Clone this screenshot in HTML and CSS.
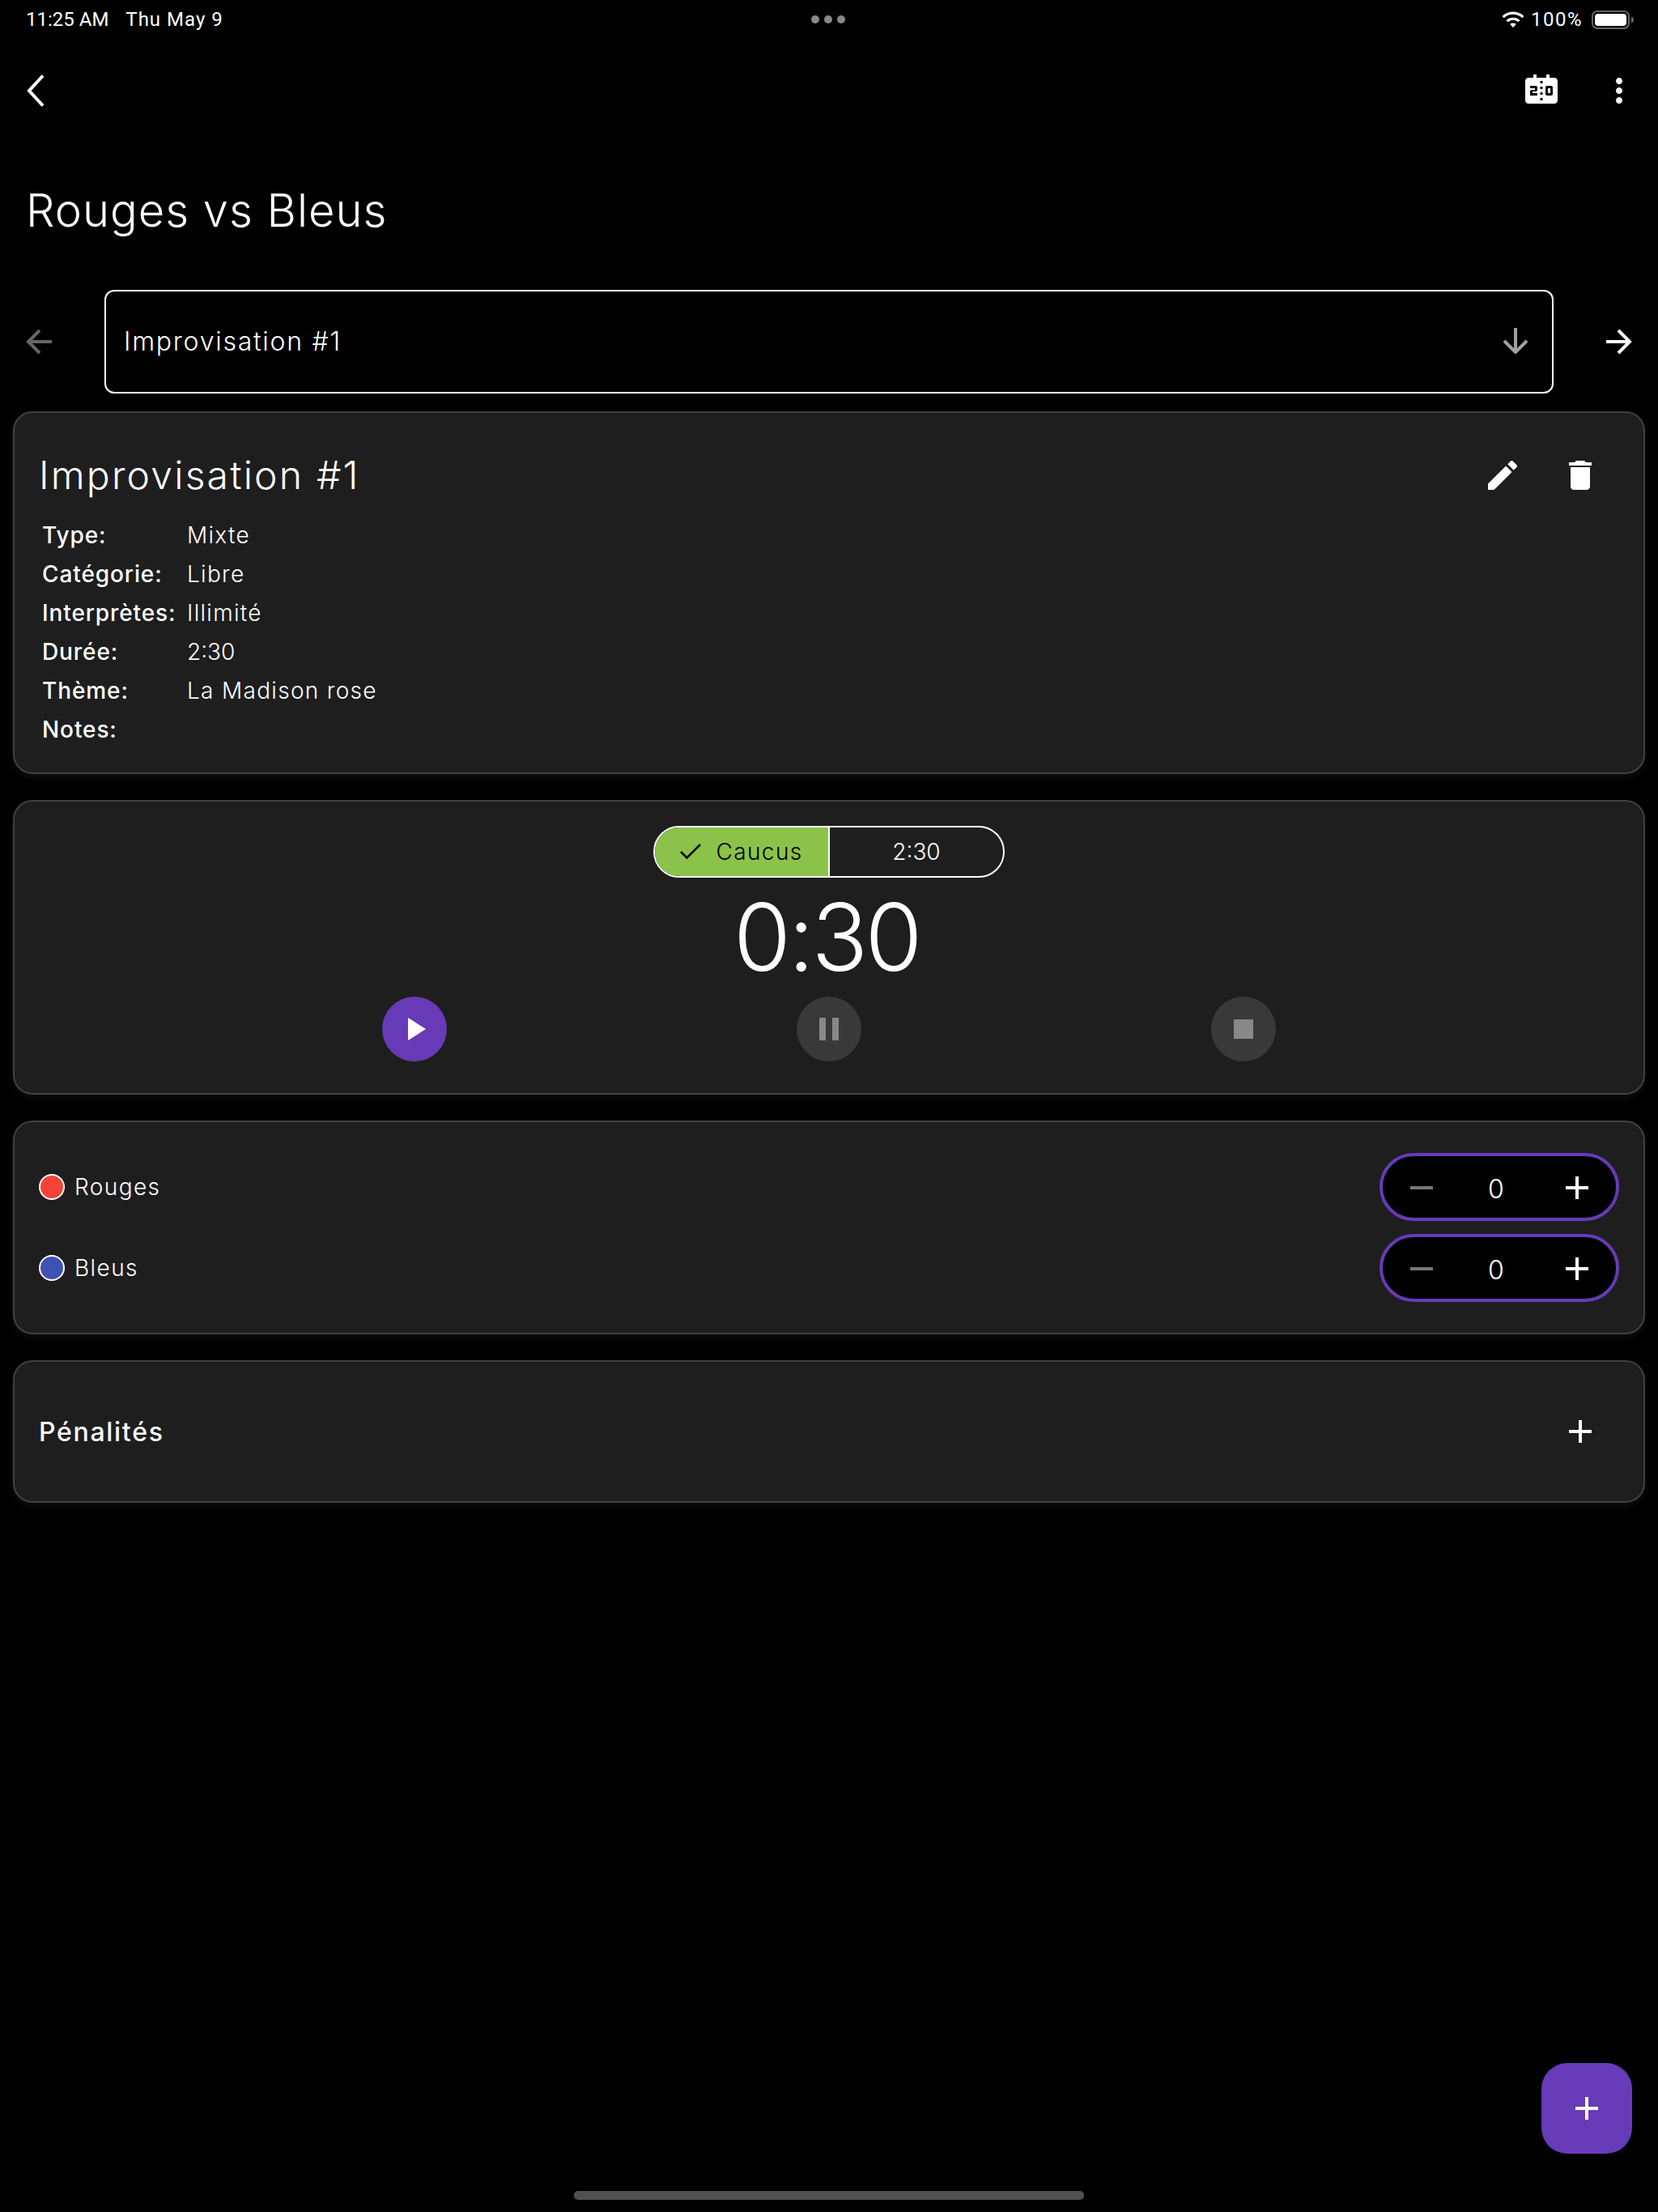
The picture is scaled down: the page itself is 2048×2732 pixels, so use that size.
FILE: index.html
```html
<!DOCTYPE html>
<html lang="en">
<head>
    <meta charset="UTF-8">
    <meta name="viewport" content="width=device-width, initial-scale=1.0">
    <title>Rouges vs Bleus</title>
    <link rel="stylesheet" href="styles.css">
</head>
<body>
    <div class="status-bar">
        <div class="status-left"><span>11:25 AM</span><span class="status-date">Thu May 9</span></div>
        <div class="status-dots"><i></i><i></i><i></i></div>
        <div class="status-right">
            <svg class="wifi" width="32" height="23" viewBox="0 0 28 20"><path fill="#fff" d="M14 4.100c3.800 0 7.300 1.400 9.900 3.900l1.900-2A17 17 0 0 0 14 1.200 17 17 0 0 0 2.200 6l1.900 2A14.300 14.300 0 0 1 14 4.100zm0 6.200c2.100 0 4.100.8 5.600 2.200l1.900-2A11 11 0 0 0 14 7.500a11 11 0 0 0-7.500 3l1.900 2a8.200 8.200 0 0 1 5.600-2.200zm3.400 4.400A5 5 0 0 0 14 13.400a5 5 0 0 0-3.400 1.300L14 18.300z"/></svg>
            <span class="status-level">100%</span>
            <div class="battery"><div class="battery-fill"></div></div>
        </div>
    </div>

    <div class="app-bar">
        <svg width="24" height="44" viewBox="0 0 24 44"><path fill="none" stroke="#fff" stroke-width="4" d="M20 3.500 3 22l17 18.500"/></svg>
        <div class="app-actions">
            <svg class="icon" viewBox="0 0 24 24"><path d="M17.500 13.500H16v-3h1.500v3zM20 4h-3V2h-2v2H9V2H7v2H4c-1.100 0-2 .9-2 2v12c0 1.100.9 2 2 2h16c1.100 0 2-.9 2-2V6c0-1.100-.9-2-2-2zM9.500 11.500c0 .55-.45 1-1 1h-2v1h3V15H5v-2.500c0-.55.45-1 1-1h2v-1H5V9h3.500c.55 0 1 .45 1 1v1.500zm3.250 6.500h-1.500v-1.500h1.500V18zm0-3.500h-1.500V13h1.500v1.500zm0-3.500h-1.500V9.500h1.500V11zm0-3.500h-1.500V6h1.500v1.500zM19 14c0 .55-.45 1-1 1h-2.500c-.55 0-1-.45-1-1v-4c0-.55.45-1 1-1H18c.55 0 1 .45 1 1v4z"/></svg>
            <svg class="icon" viewBox="0 0 24 24"><path d="M12 8c1.100 0 2-.9 2-2s-.9-2-2-2-2 .9-2 2 .9 2 2 2zm0 2c-1.100 0-2 .9-2 2s.9 2 2 2 2-.9 2-2-.9-2-2-2zm0 6c-1.100 0-2 .9-2 2s.9 2 2 2 2-.9 2-2-.9-2-2-2z"/></svg>
        </div>
    </div>

    <h1 class="page-title">Rouges vs Bleus</h1>

    <div class="select-row">
        <svg class="arrow" viewBox="0 0 32 32"><path fill="none" stroke="#666" stroke-width="4" d="M32 16H4M17 2 3 16l14 14"/></svg>
        <div class="select-box">
            <span>Improvisation #1</span>
            <svg class="arrow" viewBox="0 0 32 32"><path fill="none" stroke="#a0a0a0" stroke-width="4" d="M16 0v29M2 16l14 14 14-14"/></svg>
        </div>
        <svg class="arrow" viewBox="0 0 32 32"><path fill="none" stroke="#fff" stroke-width="4" d="M0 16h28M15 2l14 14-14 14"/></svg>
    </div>

    <div class="cards">
        <section class="card card-info">
            <div class="info-head">
                <h2>Improvisation #1</h2>
                <div class="info-actions">
                    <svg class="icon" viewBox="0 0 24 24"><path d="M3 17.250V21h3.750L17.810 9.940l-3.750-3.750L3 17.250zM20.710 7.040c.39-.39.39-1.020 0-1.410l-2.340-2.340c-.39-.39-1.020-.39-1.410 0l-1.830 1.830 3.750 3.750 1.830-1.830z"/></svg>
                    <svg class="icon" viewBox="0 0 24 24"><path d="M6 19c0 1.100.9 2 2 2h8c1.100 0 2-.9 2-2V7H6v12zM19 4h-3.500l-1-1h-5l-1 1H5v2h14V4z"/></svg>
                </div>
            </div>
            <dl class="info-list">
                <dt>Type:</dt><dd>Mixte</dd>
                <dt>Catégorie:</dt><dd>Libre</dd>
                <dt>Interprètes:</dt><dd>Illimité</dd>
                <dt>Durée:</dt><dd class="plain">2:30</dd>
                <dt>Thème:</dt><dd>La Madison rose</dd>
                <dt>Notes:</dt><dd></dd>
            </dl>
        </section>

        <section class="card card-timer">
            <div class="segments">
                <div class="segment active">
                    <svg width="26" height="20" viewBox="0 0 26 20"><path fill="none" stroke="#000" stroke-width="2.600" d="M1 10l7.500 7.500L25 1"/></svg>
                    <span class="segment-label">Caucus</span>
                </div>
                <div class="segment">2:30</div>
            </div>
            <div class="clock">0:30</div>
            <div class="timer-buttons">
                <div class="round-btn play"><svg class="icon" viewBox="0 0 24 24"><path d="M8 5v14l11-7z"/></svg></div>
                <div class="round-btn"><svg class="icon" viewBox="0 0 24 24"><path d="M6 19h4V5H6v14zm8-14v14h4V5h-4z"/></svg></div>
                <div class="round-btn"><svg class="icon" viewBox="0 0 24 24"><path d="M6 6h12v12H6z"/></svg></div>
            </div>
        </section>

        <section class="card card-score">
            <div class="team-row">
                <span class="team-dot red"></span>
                <span class="team-name">Rouges</span>
                <div class="stepper">
                    <svg class="step-icon" viewBox="0 0 28 28"><path stroke="#777" stroke-width="4" d="M0 14h28"/></svg>
                    <span class="step-value">0</span>
                    <svg class="step-icon" viewBox="0 0 28 28"><path stroke="#fff" stroke-width="4" d="M0 14h28M14 0v28"/></svg>
                </div>
            </div>
            <div class="team-row">
                <span class="team-dot blue"></span>
                <span class="team-name">Bleus</span>
                <div class="stepper">
                    <svg class="step-icon" viewBox="0 0 28 28"><path stroke="#777" stroke-width="4" d="M0 14h28"/></svg>
                    <span class="step-value">0</span>
                    <svg class="step-icon" viewBox="0 0 28 28"><path stroke="#fff" stroke-width="4" d="M0 14h28M14 0v28"/></svg>
                </div>
            </div>
        </section>

        <section class="card card-penalty">
            <h3>Pénalités</h3>
            <svg class="step-icon" viewBox="0 0 28 28"><path stroke="#fff" stroke-width="4" d="M0 14h28M14 0v28"/></svg>
        </section>
    </div>

    <button class="fab"><svg class="step-icon" viewBox="0 0 28 28"><path stroke="#fff" stroke-width="4" d="M0 14h28M14 0v28"/></svg></button>
    <div class="home-bar"></div>
</body>
</html>
```
FILE: styles.css
```css
body {
    font-family: Inter, "Noto Sans", sans-serif;
    background-color: #000;
    color: #fff;
    margin: 0;
    padding: 0;
    height: 2732px;
    position: relative;
    overflow: hidden;
}
.icon {
    width: 48px;
    height: 48px;
    fill: #fff;
    display: block;
}
.step-icon {
    width: 28px;
    height: 28px;
    display: block;
}

/* status bar */
.status-bar {
    height: 48px;
    padding: 0 35px 0 32px;
    display: grid;
    grid-template-columns: 1fr auto 1fr;
    align-items: center;
    font-family: Roboto, sans-serif;
    font-size: 24px;
}
.status-left {
    display: flex;
    gap: 21px;
}
.status-date {
    letter-spacing: 1px;
}
.status-dots {
    display: flex;
    gap: 6px;
}
.status-dots i {
    width: 10px;
    height: 10px;
    border-radius: 50%;
    background-color: #888;
}
.status-right {
    display: flex;
    align-items: center;
    justify-content: flex-end;
}
.status-level {
    margin: 0 11px 0 6px;
    letter-spacing: 1.500px;
}
.battery {
    width: 47px;
    height: 23px;
    box-sizing: border-box;
    border: 2px solid #666;
    border-radius: 7px;
    padding: 2px;
    position: relative;
}
.battery::after {
    content: "";
    position: absolute;
    right: -7px;
    top: 6px;
    width: 3px;
    height: 7px;
    border-radius: 0 3px 3px 0;
    background-color: #666;
}
.battery-fill {
    height: 100%;
    background-color: #fff;
    border-radius: 4px;
}

/* top bar */
.app-bar {
    height: 96px;
    margin-top: 16px;
    padding: 0 24px 0 33px;
    display: flex;
    justify-content: space-between;
    align-items: center;
}
.app-actions {
    display: flex;
    gap: 48px;
}
.page-title {
    margin: 0;
    padding: 0 0 0 32px;
    height: 198px;
    line-height: 200px;
    font-size: 56px;
    font-weight: 300;
    letter-spacing: 1px;
}

/* impro selector */
.select-row {
    display: flex;
    align-items: center;
    justify-content: space-between;
    padding: 0 32px;
    height: 128px;
}
.arrow {
    width: 32px;
    height: 32px;
    display: block;
}
.select-box {
    width: 1790px;
    height: 128px;
    box-sizing: border-box;
    border: 2px solid #fff;
    border-radius: 12px;
    padding: 0 29px 2px 22px;
    display: flex;
    align-items: center;
    justify-content: space-between;
    font-size: 32px;
    font-weight: 300;
    letter-spacing: 1.750px;
}

/* cards */
.cards {
    margin: 22px 16px 0;
    display: flex;
    flex-direction: column;
    gap: 32px;
}
.card {
    box-sizing: border-box;
    background-color: #1e1e1e;
    border: 2px solid #404040;
    border-radius: 24px;
    box-shadow: 0 4px 8px rgba(255, 255, 255, 0.06);
}
.card-info {
    height: 448px;
    padding: 37px 30px 0 30px;
}
.info-head {
    display: flex;
    justify-content: space-between;
    align-items: center;
}
.info-head h2 {
    margin: 0;
    font-size: 48px;
    font-weight: 300;
    line-height: 80px;
    letter-spacing: 2.200px;
}
.info-actions {
    display: flex;
    gap: 48px;
    padding-right: 24px;
}
.info-list {
    margin: 10px 0 0 4px;
    display: grid;
    grid-template-columns: 179px 1fr;
    grid-auto-rows: 48px;
    align-items: center;
    font-size: 28px;
}
.info-list dt {
    font-weight: 500;
    letter-spacing: .9px;
}
.info-list dd {
    margin: 0;
    font-weight: 300;
    letter-spacing: 1.300px;
}
.info-list dd.plain {
    letter-spacing: 0;
}

/* timer */
.card-timer {
    height: 364px;
    padding-top: 30px;
    display: flex;
    flex-direction: column;
    align-items: center;
}
.segments {
    width: 434px;
    height: 64px;
    box-sizing: border-box;
    border: 2px solid #fff;
    border-radius: 32px;
    overflow: hidden;
    display: flex;
    font-size: 28px;
    font-weight: 300;
}
.segment {
    flex: 1;
    display: flex;
    align-items: center;
    justify-content: center;
}
.segment.active {
    flex: none;
    width: 216px;
    gap: 20px;
    background-color: #8bc34a;
    color: #000;
    border-right: 2px solid #fff;
    box-sizing: border-box;
}
.segment-label {
    letter-spacing: 1.400px;
    margin-left: -2px;
}
.clock {
    margin-top: 4px;
    padding-right: 6px;
    font-size: 115px;
    font-weight: 300;
    line-height: 140px;
    letter-spacing: -3.500px;
}
.timer-buttons {
    margin-top: 3px;
    width: 1104px;
    display: flex;
    justify-content: space-between;
}
.round-btn {
    width: 80px;
    height: 80px;
    border-radius: 50%;
    background-color: #393939;
    display: flex;
    align-items: center;
    justify-content: center;
}
.round-btn .icon {
    fill: #888;
}
.round-btn.play {
    background-color: #673ab7;
}
.round-btn.play .icon {
    fill: #fff;
}

/* score */
.card-score {
    height: 264px;
    padding: 38px 30px 0 30px;
    display: flex;
    flex-direction: column;
    gap: 16px;
}
.team-row {
    display: flex;
    align-items: center;
    font-size: 28px;
    font-weight: 300;
}
.team-dot {
    width: 32px;
    height: 32px;
    box-sizing: border-box;
    border: 2px solid #fff;
    border-radius: 50%;
    margin-right: 12px;
}
.team-dot.red {
    background-color: #f44336;
}
.team-dot.blue {
    background-color: #3f51b5;
}
.team-name {
    flex: 1;
    letter-spacing: 1.400px;
}
.stepper {
    width: 296px;
    height: 84px;
    box-sizing: border-box;
    border: 4px solid #673ab7;
    border-radius: 42px;
    background-color: #000;
    display: flex;
    align-items: center;
    justify-content: space-between;
    padding: 2px 34px 0 34px;
}
.step-value {
    font-size: 32px;
    font-weight: 300;
    margin: 2px 8px 0 0;
}

/* penalties */
.card-penalty {
    height: 176px;
    padding: 0 64px 0 30px;
    display: flex;
    justify-content: space-between;
    align-items: center;
}
.card-penalty h3 {
    margin: 0;
    font-size: 32px;
    font-weight: 500;
    letter-spacing: 1.700px;
}

.fab {
    position: absolute;
    right: 32px;
    bottom: 72px;
    width: 112px;
    height: 112px;
    border: none;
    border-radius: 32px;
    background-color: #673ab7;
    display: flex;
    align-items: center;
    justify-content: center;
    padding: 0;
}
.home-bar {
    position: absolute;
    left: 709px;
    bottom: 15px;
    width: 630px;
    height: 11px;
    border-radius: 5px;
    background-color: #505050;
}
```
